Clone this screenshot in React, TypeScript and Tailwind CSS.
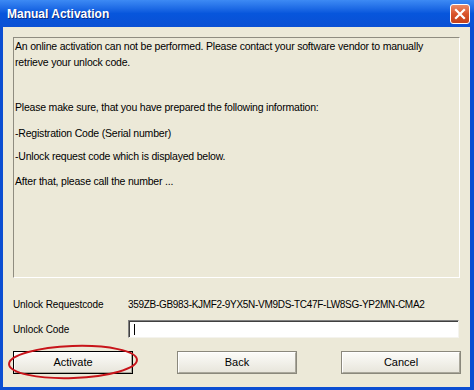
import React from "react";

const font = { fontFamily: '"Liberation Sans", Arial, sans-serif' };

function CloseButton() {
  return (
    <div className="w-[20px] h-[20px] rounded-[3px] border border-white bg-gradient-to-b from-[#eb8a66] via-[#d9532a] to-[#c2401a] flex items-center justify-center">
      <svg width="12" height="12" viewBox="0 0 12 12">
        <path d="M2 2 L10 10 M10 2 L2 10" stroke="white" strokeWidth="2.2" strokeLinecap="square" />
      </svg>
    </div>
  );
}

function XpButton({ label, isDefault }: { label: string; isDefault?: boolean }) {
  return (
    <div
      className={
        isDefault
          ? "w-[120px] h-[23px] border border-black"
          : "w-[120px] h-[23px] border border-[#8a887c]"
      }
    >
      <div className="w-full h-full bg-gradient-to-b from-[#fbfbf8] to-[#e8e6dc] border-t border-l border-white border-r border-b border-r-[#a9a79b] border-b-[#a9a79b] flex items-center justify-center text-[11px] text-black">
        {label}
      </div>
    </div>
  );
}

export default function App() {
  return (
    <div className="w-[474px] h-[390px] flex flex-col bg-[#0b4ed2] overflow-hidden" style={font}>
      {/* title bar */}
      <div className="h-[27px] shrink-0 flex items-center justify-between pl-[7px] pr-[4px] bg-gradient-to-b from-[#3d8af4] via-[#0756dc] to-[#0a50d4]">
        <span className="text-white font-bold text-[12px] [text-shadow:1px_1px_0_#0a2a80]">Manual Activation</span>
        <CloseButton />
      </div>

      {/* window body */}
      <div className="flex-1 flex flex-col bg-[#ece9d8] ml-[3px] mr-[4px] mb-[3px] relative">
        <div className="mt-[10px] ml-[10px] w-[447px] h-[241px] border-t border-l border-[#8f8c80] border-r border-b border-r-white border-b-white px-[1px] text-[10.5px] tracking-[-0.2px] text-black">
          <p className="leading-[16px] mt-[0px]">
            An online activation can not be performed. Please contact your software vendor to manually
            <br />
            retrieve your unlock code.
          </p>
          <p className="leading-[16px] mt-[29px]">Please make sure, that you have prepared the following information:</p>
          <p className="leading-[16px] mt-[10px]">-Registration Code (Serial number)</p>
          <p className="leading-[16px] mt-[7px]">-Unlock request code which is displayed below.</p>
          <p className="leading-[16px] mt-[9px]">After that, please call the number ...</p>
        </div>

        <div className="mt-[18px] ml-[10px] h-[16px] flex items-center text-[10px] text-black">
          <span className="w-[115px] tracking-[-0.1px]">Unlock Requestcode</span>
          <span className="tracking-[-0.3px]">359ZB-GB983-KJMF2-9YX5N-VM9DS-TC47F-LW8SG-YP2MN-CMA2</span>
        </div>

        <div className="mt-[8px] ml-[10px] h-[18px] flex items-center text-[10px] text-black">
          <span className="w-[115px] tracking-[-0.1px]">Unlock Code</span>
          <div className="w-[331px] h-[18px] bg-white border-t border-l border-[#808080] border-r border-b border-r-[#f4f3ee] border-b-[#f4f3ee] shadow-[inset_1px_1px_0_#404040] flex items-center pl-[5px]">
            <span className="w-px h-[11px] bg-black" />
          </div>
        </div>

        <div className="mt-[13px] ml-[10px] w-[448px] flex justify-between">
          <XpButton label="Activate" isDefault />
          <XpButton label="Back" />
          <XpButton label="Cancel" />
        </div>

        <svg className="absolute left-[3px] top-[315px]" width="134" height="40" viewBox="0 0 134 40">
          <ellipse cx="67" cy="20" rx="64" ry="16" fill="none" stroke="#c8141a" strokeWidth="2" transform="rotate(-2 67 20)" />
        </svg>
      </div>
    </div>
  );
}
